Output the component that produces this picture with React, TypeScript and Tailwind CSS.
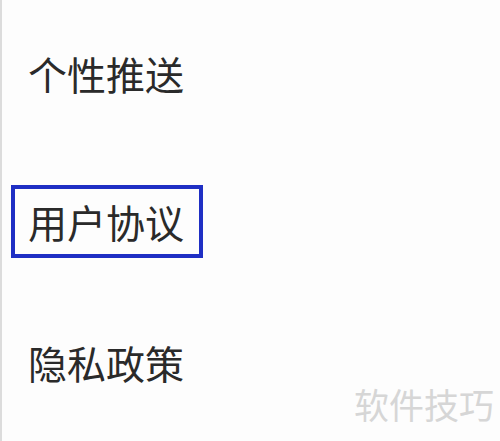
import React from 'react';

const font = "font-['Noto_Sans_CJK_SC','Noto_Sans',sans-serif]";

const App = () => {
  return (
    <div className={`relative w-[500px] h-[441px] overflow-hidden bg-[#fdfdfd] border-l-2 border-[#dcdcdc] ${font}`}>
      <div className="flex flex-col pl-[26px] pt-[45px]">
        <div className="h-[56px] flex items-center text-[39px] leading-none text-[#2a2a2a]">个性推送</div>
        <div className="mt-[84px] -ml-[17px] w-[192px] h-[73px] border-4 border-[#1f2fc4] flex items-center pl-[13px] text-[39px] leading-none text-[#2a2a2a]">
          用户协议
        </div>
        <div className="mt-[76px] h-[56px] flex items-center text-[39px] leading-none text-[#2a2a2a]">隐私政策</div>
      </div>
      <div className="absolute right-[6px] top-[386px] text-[35px] leading-none text-[#d6d6d6]">软件技巧</div>
    </div>
  );
};

export default App;
